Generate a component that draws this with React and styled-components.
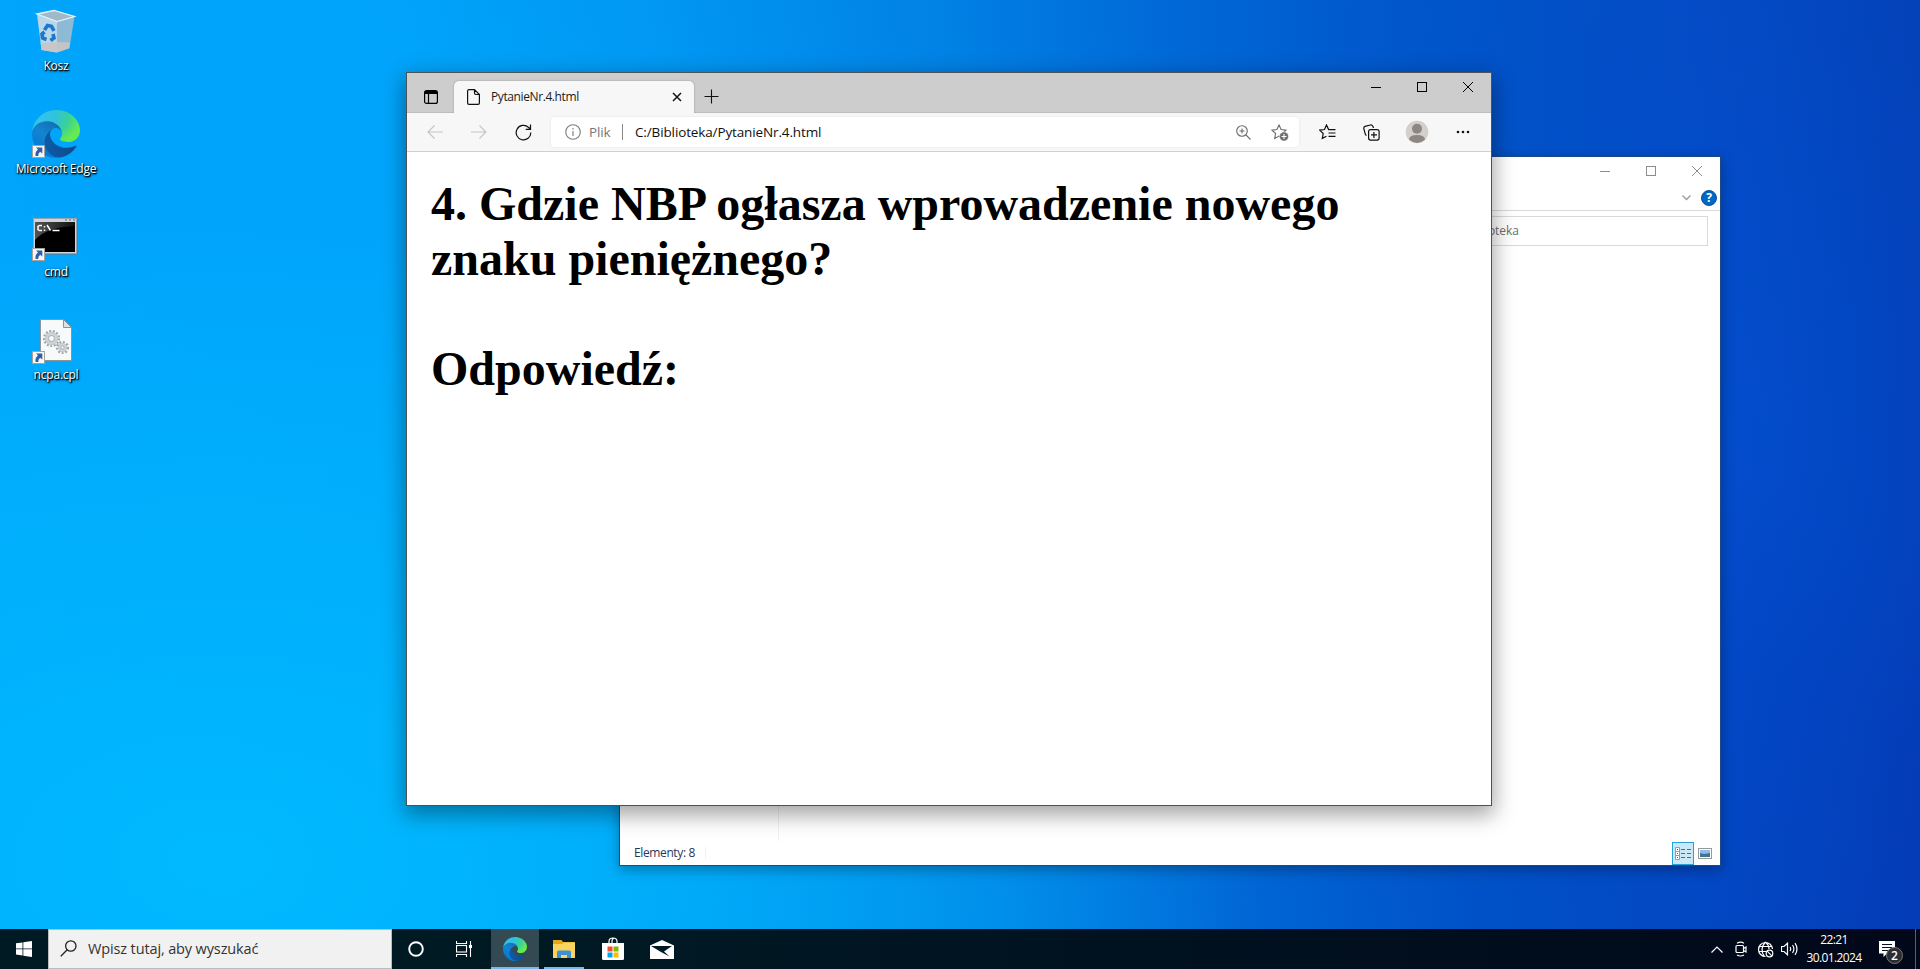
import React from "react";
import styled, { createGlobalStyle, css } from "styled-components";

const Global = createGlobalStyle`
  html, body { margin: 0; padding: 0; overflow: hidden; }
  * { box-sizing: border-box; }
  svg { display: block; flex: none; }
`;

const ui = '"Open Sans", "Noto Sans", sans-serif';

const Screen = styled.div`
  width: 1920px;
  height: 969px;
  display: flex;
  flex-direction: column;
  font-family: ${ui};
  font-size: 12px;
  overflow: hidden;
`;

const Desktop = styled.main`
  position: relative;
  height: 929px;
  background:
    linear-gradient(205deg, rgba(0, 120, 225, 0.14) 0, rgba(0, 120, 225, 0.08) 30%, transparent 41%),
    radial-gradient(ellipse 1050px 640px at 220px 860px, rgba(0, 190, 255, 0.8), transparent),
    radial-gradient(ellipse 260px 560px at 1740px 440px, rgba(0, 80, 220, 0.4), transparent),
    linear-gradient(86deg, #00a6fc 0%, #00a5fb 22%, #009af4 36%, #0084e6 50%, #0068d6 62%, #0052c8 74%, #0345c0 88%, #0339b2 100%);
`;

const IconGrid = styled.div`
  width: 112px;
  padding-top: 7px;
  display: flex;
  flex-direction: column;
`;

const Shortcut = styled.div`
  position: relative;
  height: 103px;
  display: flex;
  flex-direction: column;
  align-items: center;
  gap: 3px;
`;

const ShortcutLabel = styled.span`
  color: #fff;
  font-size: 12px;
  line-height: 16px;
  letter-spacing: -0.2px;
  white-space: nowrap;
  text-shadow: 1px 1px 1px #000, 1px 1px 2px rgba(0, 0, 0, 0.9), 0 1px 3px rgba(0, 0, 0, 0.6);
`;

const ArrowBadge = styled.div`
  position: absolute;
  left: 32px;
  top: 35px;
`;

const windowFrame = css`
  position: absolute;
  display: flex;
  flex-direction: column;
  background: #fff;
`;

const ExplorerWindow = styled.section`
  ${windowFrame}
  left: 619px;
  top: 156px;
  width: 1102px;
  height: 710px;
  border: 1px solid #1b4a86;
  box-shadow: 0 4px 12px rgba(0, 0, 0, 0.3);
`;

const BrowserWindow = styled.section`
  ${windowFrame}
  left: 406px;
  top: 72px;
  width: 1086px;
  height: 734px;
  border: 1px solid #4b5358;
  box-shadow: 0 7px 20px 2px rgba(0, 0, 0, 0.36);
`;

const Captions = styled.div`
  height: 28px;
  display: flex;
  justify-content: flex-end;
  align-items: center;
  color: ${(p) => p.$color};
`;

const CaptionButton = styled.span`
  width: 46px;
  height: 28px;
  display: flex;
  align-items: center;
  justify-content: center;
`;

const RibbonEnd = styled.div`
  height: 26px;
  padding: 1px 3px 0 0;
  display: flex;
  justify-content: flex-end;
  align-items: center;
  gap: 10px;
  border-bottom: 1px solid #d8d9da;
`;

const Help = styled.span`
  width: 16px;
  height: 16px;
  border-radius: 50%;
  display: flex;
  align-items: center;
  justify-content: center;
  background: #0067c4;
  border: 1px solid #0a5196;
  color: #fff;
  font-size: 12px;
  font-weight: 700;
  line-height: 14px;
`;

const PathBox = styled.div`
  margin: 5px 12px 0 200px;
  height: 30px;
  border: 1px solid #d9d9d9;
  display: flex;
  align-items: center;
  padding: 0 0 1px 643px;
  color: #6d6d6d;
  font-size: 12px;
  letter-spacing: -0.05px;
`;

const ExplorerBody = styled.div`
  flex: 1;
  display: flex;
`;

const NavPane = styled.div`
  width: 159px;
  border-right: 1px solid #f0f0f0;
`;

const StatusBar = styled.footer`
  height: 24px;
  display: flex;
  align-items: center;
  padding: 1px 8px 0 14px;
  color: #1e395b;
  font-size: 12px;
  letter-spacing: -0.38px;
`;

const StatusText = styled.span`
  width: 72px;
  height: 12px;
  margin-bottom: 2px;
  line-height: 12px;
  white-space: nowrap;
  border-right: 1px solid #f0f0f0;
`;

const ViewModes = styled.div`
  margin-left: auto;
  display: flex;
  align-items: center;
  gap: 4px;
`;

const ActiveView = styled.span`
  width: 22px;
  height: 23px;
  border: 1px solid #26a0da;
  background: #cbe8f6;
  display: flex;
  align-items: center;
  justify-content: center;
`;

const TabStrip = styled.header`
  height: 40px;
  display: flex;
  background: #cdcdcd;
  border-bottom: 1px solid #bdbdbd;
`;

const TabActions = styled.span`
  width: 47px;
  padding: 17px 0 0 17px;
`;

const Tab = styled.div`
  margin-top: 8px;
  width: 240px;
  height: 32px;
  padding: 0 12px 0 13px;
  display: flex;
  align-items: center;
  background: #f7f7f7;
  border-radius: 5px 5px 0 0;
  box-shadow: 0 0 2px rgba(0, 0, 0, 0.3);
  clip-path: inset(-3px -3px 0 -3px);
`;

const TabTitle = styled.span`
  margin-left: 11px;
  flex: 1;
  font-size: 12px;
  line-height: 16px;
  letter-spacing: -0.4px;
  color: #1b1b1b;
`;

const NewTab = styled.span`
  padding: 16px 0 0 10px;
`;

const TabCaptions = styled.div`
  margin-left: auto;
`;

const Toolbar = styled.nav`
  height: 39px;
  display: flex;
  align-items: center;
  background: #f7f7f7;
  border-bottom: 1px solid #d0d0d0;
`;

const ToolButton = styled.span`
  width: ${(p) => p.$w || 44}px;
  height: 38px;
  display: flex;
  align-items: center;
  justify-content: center;
`;

const Address = styled.div`
  width: 748px;
  height: 30px;
  margin-right: 6px;
  padding: 0 10px 0 14px;
  display: flex;
  align-items: center;
  background: #fff;
  border-radius: 4px;
  box-shadow: 0 0 3px rgba(0, 0, 0, 0.08);
`;

const Scheme = styled.span`
  margin-left: 8px;
  width: 33px;
  color: #767676;
  font-size: 13.5px;
  letter-spacing: -0.15px;
`;

const Url = styled.span`
  margin-left: 12px;
  flex: 1;
  color: #111;
  font-size: 13.5px;
  letter-spacing: -0.13px;
  white-space: nowrap;
`;

const Rule = styled.span`
  width: 1px;
  height: 16px;
  background: #8a8a8a;
`;

const AddressIcons = styled.span`
  display: flex;
  align-items: center;
  gap: 20px;
`;

const Page = styled.article`
  flex: 1;
  padding: 24px;
  font-family: "Liberation Serif", "Times New Roman", serif;
  font-weight: 700;
  font-size: 48px;
  line-height: 55px;
  color: #000;
`;

const Question = styled.p`
  margin: 0 0 55px;
`;

const Taskbar = styled.footer`
  height: 40px;
  display: flex;
  background: linear-gradient(90deg, #001a24 0%, #001a24 30%, #00101f 65%, #010819 100%);
  color: #fff;
`;

const TaskButton = styled.span`
  position: relative;
  width: 48px;
  height: 40px;
  margin-right: ${(p) => p.$gap || 0}px;
  display: flex;
  align-items: center;
  justify-content: center;
  background: ${(p) => (p.$active ? "#334a53" : "transparent")};
  ${(p) =>
    p.$line &&
    css`
      &::after {
        content: "";
        position: absolute;
        bottom: 0;
        width: ${p.$line}px;
        height: 2px;
        background: #76b9ed;
      }
    `}
`;

const Search = styled.div`
  width: 344px;
  height: 40px;
  padding: 0 0 1px 11px;
  display: flex;
  align-items: center;
  gap: 11px;
  background: #f1f1f1;
  border: 1px solid #bdbdbd;
  color: #333;
  font-size: 14.5px;
  letter-spacing: -0.13px;
`;

const Tray = styled.div`
  margin-left: auto;
  display: flex;
  align-items: center;
`;

const TrayIcon = styled.span`
  width: 24px;
  display: flex;
  justify-content: center;
`;

const Clock = styled.div`
  width: 66px;
  display: flex;
  flex-direction: column;
  align-items: center;
  font-size: 12px;
  line-height: 18px;
  letter-spacing: -0.62px;
`;

const Notifications = styled.div`
  position: relative;
  width: 48px;
  height: 40px;
  padding: 12px 0 0 12px;
`;

const Count = styled.span`
  position: absolute;
  left: 19px;
  top: 18px;
  width: 17px;
  height: 17px;
  border-radius: 50%;
  border: 1px solid #777;
  background: #2b2d33;
  font-size: 12px;
  font-weight: 600;
  line-height: 15px;
  text-align: center;
`;

const ShowDesktop = styled.span`
  width: 5px;
  height: 40px;
  border-left: 1px solid #59606c;
`;

const EdgeLogo = ({ size, id }) => (
  <svg width={size} height={size} viewBox="0 0 256 256">
    <defs>
      <linearGradient id={id + "a"} x1="0.2" y1="0.5" x2="1" y2="0.5">
        <stop offset="0" stopColor="#0c59a4" />
        <stop offset="1" stopColor="#114a8b" />
      </linearGradient>
      <linearGradient id={id + "b"} x1="0.8" y1="0.2" x2="0.3" y2="1">
        <stop offset="0" stopColor="#1272b8" />
        <stop offset="0.4" stopColor="#1583d0" />
        <stop offset="1" stopColor="#0078d4" />
      </linearGradient>
      <radialGradient id={id + "c"} cx="0.1" cy="0.2" r="0.95">
        <stop offset="0" stopColor="#35c1f1" />
        <stop offset="0.4" stopColor="#2fc2df" />
        <stop offset="0.7" stopColor="#3ad09a" />
        <stop offset="1" stopColor="#66eb4e" />
      </radialGradient>
    </defs>
    <g transform="translate(-4.63 -4.92)">
      <path fill={`url(#${id}a)`} d="M235.68 195.46a93.73 93.73 0 01-10.54 4.71 101.87 101.87 0 01-35.9 6.46c-47.32 0-88.54-32.55-88.54-74.32A31.48 31.48 0 01117.13 105c-42.8 1.8-53.8 46.4-53.8 72.53 0 73.88 68.09 81.37 82.76 81.37 7.91 0 19.84-2.3 27-4.56l1.31-.44a128.34 128.34 0 0066.6-52.8 4 4 0 00-5.32-5.64z" />
      <path fill={`url(#${id}b)`} d="M110.34 246.34A79.2 79.2 0 0187.6 225a80.72 80.72 0 0129.53-120c3.12-1.47 8.45-4.13 15.54-4a32.35 32.35 0 0125.69 13 31.88 31.88 0 016.36 18.66c0-.21 24.46-79.6-80-79.6-43.9 0-80 41.66-80 78.21a130.15 130.15 0 0012.11 56 128 128 0 00156.38 67.11 75.55 75.55 0 01-62.78-8z" />
      <path fill={`url(#${id}c)`} d="M156.94 153.78c-.81 1.05-3.3 2.5-3.3 5.66 0 2.61 1.7 5.12 4.72 7.23 14.38 10 41.49 8.68 41.56 8.68a59.56 59.56 0 0030.27-8.35 61.38 61.38 0 0030.43-52.88c.26-22.41-8-37.31-11.34-43.91C228.09 28.76 182.35 4.92 132.61 4.92a128 128 0 00-128 126.2c.48-36.54 36.8-66.05 80-66.05 3.5 0 23.46.34 42 10.07 16.34 8.58 24.9 18.94 30.85 29.21 6.18 10.67 7.28 24.15 7.28 29.52s-2.74 13.33-7.8 19.91z" />
    </g>
  </svg>
);

const ShortcutArrow = () => (
  <ArrowBadge>
    <svg width="13" height="13">
      <rect x="0.5" y="0.5" width="12" height="12" fill="#f7f7f7" stroke="#a8a29c" />
      <path d="M4 2.5h6.3v6L8.200 6.700Q6 8.300 6.200 11H3.600Q2.800 7 6 4.600z" fill="#2c5fa8" />
    </svg>
  </ArrowBadge>
);

const BinIcon = () => (
  <svg width="48" height="48">
    <g transform="translate(0 1)">
      <path d="M5 6l17-3.500 20.500 6-17.500 5z" fill="#9fb9c9" />
      <path d="M5 6l20 7.500V44.500L9.500 42z" fill="#b9d7e8" />
      <path d="M25 13.500l17.500-5L37.500 40 25 44.500z" fill="#8fbad6" />
      <path d="M8.600 35l16-1 13.500.5-1 6L25 44.500 9.500 42z" fill="#c9c5c6" opacity=".9" />
      <path d="M5 6l17-3.500 20.500 6-17.500 5z" fill="none" stroke="#e6f2f8" strokeWidth="1.300" />
      <path d="M12.500 22l3-4.500 4 .8 2.500 4.500M21 26l1 4-3.500 2.500M14.500 31.500l-4-1.500-.5-4 2.500-2" fill="none" stroke="#1b78cf" strokeWidth="3.600" />
    </g>
  </svg>
);

const CmdIcon = () => (
  <svg width="48" height="48">
    <defs>
      <linearGradient id="cmdGlow" x1="0" y1="0" x2="1" y2="0">
        <stop offset="0" stopColor="#555" />
        <stop offset="1" stopColor="#111" />
      </linearGradient>
    </defs>
    <rect x="3" y="6" width="43" height="36" fill="#5e7787" opacity=".6" />
    <rect x="1.500" y="5.500" width="43" height="35" fill="#cfd5da" stroke="#9aa3ab" />
    <path d="M33 7h2m2 0h2m2 0h2" stroke="#56657a" strokeWidth="1.200" />
    <rect x="3" y="9" width="40" height="30" fill="#000" />
    <path d="M3 9h40v4Q14 14 3 27z" fill="url(#cmdGlow)" />
    <path d="M10 12.500H7.500l-1.500 1v3l1.500 1H10M12.500 13v1.500m0 2v1.500M15 12l3.500 5.500M20.500 17.500h7" fill="none" stroke="#fff" strokeWidth="1.500" />
  </svg>
);

const Gear = ({ x, y, r, hole }) => (
  <g transform={`translate(${x} ${y})`} fill="none">
    <circle r={r + 1.2} stroke="#a0a8ad" strokeWidth="2.400" strokeDasharray="1.900 1.700" />
    <circle r={(r + hole) / 2} stroke="#cdd4d8" strokeWidth={r - hole} />
    <circle r={r} stroke="#b4bbc0" strokeWidth=".6" />
    <circle r={hole} stroke="#9da5aa" strokeWidth=".9" />
  </g>
);

const CplIcon = () => (
  <svg width="48" height="48">
    <path d="M8.500 3.500h23l8 8v33h-31z" fill="#f8f9f9" stroke="#8d9498" />
    <path d="M31.500 3.500v8h8z" fill="#dfe2e4" stroke="#8d9498" />
    <Gear x={19.5} y={22.5} r={6.2} hole={3} />
    <Gear x={30.5} y={31.5} r={4.2} hole={1.6} />
  </svg>
);

const CaptionSet = ({ color }) => (
  <Captions $color={color}>
    <CaptionButton>
      <svg width="10" height="10" stroke="currentColor"><path d="M0 5.500h10" /></svg>
    </CaptionButton>
    <CaptionButton>
      <svg width="10" height="10" stroke="currentColor" fill="none"><rect x=".5" y=".5" width="9" height="9" /></svg>
    </CaptionButton>
    <CaptionButton>
      <svg width="10" height="10" stroke="currentColor"><path d="M0 0l10 10M10 0L0 10" /></svg>
    </CaptionButton>
  </Captions>
);

const Explorer = () => (
  <ExplorerWindow>
    <CaptionSet color="#8c8c8c" />
    <RibbonEnd>
      <svg width="9" height="6" fill="none" stroke="#999" strokeWidth="1.300"><path d="M.5.500l4 4 4-4" /></svg>
      <Help>?</Help>
    </RibbonEnd>
    <PathBox>Biblioteka</PathBox>
    <ExplorerBody>
      <NavPane />
    </ExplorerBody>
    <StatusBar>
      <StatusText>Elementy: 8</StatusText>
      <ViewModes>
        <ActiveView>
          <svg width="16" height="13" fill="none">
            <path d="M.5.500h4v12h-4zM.5 4.500h4M.5 8.500h4" fill="#fff" stroke="#9a9a9a" />
            <path d="M6 2.500h4m2 0h4M6 6.500h4m2 0h4M6 10.500h4m2 0h4" stroke="#666" />
            <path d="M2 2.500h1" stroke="#333" /><path d="M2 6.500h1" stroke="#37f" /><path d="M2 10.500h1" stroke="#d22" />
          </svg>
        </ActiveView>
        <svg width="14" height="11">
          <rect x=".5" y=".5" width="13" height="10" fill="#fff" stroke="#999" />
          <rect x="2" y="2" width="10" height="7" fill="#8bbdf0" />
          <path d="M2 5l4 1 6-1v4H2z" fill="#3f7590" />
        </svg>
      </ViewModes>
    </StatusBar>
  </ExplorerWindow>
);

const star = "M8 1l2.100 4.500 4.900.6-3.600 3.400.9 4.900L8 12.100 3.700 14.400l.9-4.900L1 6.100l4.900-.6z";

const Browser = () => (
  <BrowserWindow>
    <TabStrip>
      <TabActions>
        <svg width="14" height="14" fill="none" stroke="#000" strokeWidth="1.200">
          <rect x=".6" y=".6" width="12.800" height="12.800" rx="2" />
          <path d="M1 2.500h12" strokeWidth="3" /><path d="M4.500 4v9" />
        </svg>
      </TabActions>
      <Tab>
        <svg width="13" height="16" fill="none" stroke="#111" strokeWidth="1.200">
          <path d="M2 .6h5.500L12.400 5.500V14q0 1.400-1.400 1.400H2Q.6 15.400.6 14V2Q.6.600 2 .6zM7.500.600v3.500q0 1.400 1.400 1.400h3.500" />
        </svg>
        <TabTitle>PytanieNr.4.html</TabTitle>
        <svg width="10" height="10" stroke="#111" strokeWidth="1.500"><path d="M1 1l8 8M9 1L1 9" /></svg>
      </Tab>
      <NewTab>
        <svg width="15" height="15" stroke="#111" strokeWidth="1.100"><path d="M.5 7.500h14M7.500.500v14" /></svg>
      </NewTab>
      <TabCaptions>
        <CaptionSet color="#000" />
      </TabCaptions>
    </TabStrip>
    <Toolbar>
      <ToolButton $w={56}>
        <svg width="16" height="14" fill="none" stroke="#c4c4c4" strokeWidth="1.100"><path d="M16 7H1M7.500.500L1 7l6.500 6.500" /></svg>
      </ToolButton>
      <ToolButton $w={32}>
        <svg width="16" height="14" fill="none" stroke="#c4c4c4" strokeWidth="1.100"><path d="M0 7h15M8.500.500L15 7l-6.500 6.500" /></svg>
      </ToolButton>
      <ToolButton $w={56}>
        <svg width="17" height="17" fill="none" stroke="#111" strokeWidth="1.200">
          <path d="M15.800 8.500A7.300 7.300 0 1 1 13.400 3.200L15.500 5M15.500.500V5.300H10.700" />
        </svg>
      </ToolButton>
      <Address>
        <svg width="16" height="16" fill="none" stroke="#7a7a7a" strokeWidth="1.100">
          <circle cx="8" cy="8" r="7.300" /><path d="M8 7v5M8 4v1.500" />
        </svg>
        <Scheme>Plik</Scheme>
        <Rule />
        <Url>C:/Biblioteka/PytanieNr.4.html</Url>
        <AddressIcons>
          <svg width="15" height="15" fill="none" stroke="#6b6b6b" strokeWidth="1.100">
            <circle cx="6" cy="6" r="5.300" /><path d="M10 10l4.500 4.500M3.500 6h5M6 3.500v5" />
          </svg>
          <svg width="18" height="17" fill="none" stroke="#6b6b6b" strokeWidth="1.100">
            <path d={star} />
            <circle cx="13" cy="12.500" r="4.500" fill="#6b6b6b" stroke="#fff" strokeWidth=".5" />
            <path d="M10.500 12.500h5M13 10v5" stroke="#fff" />
          </svg>
        </AddressIcons>
      </Address>
      <ToolButton>
        <svg width="17" height="17" fill="none" stroke="#111" strokeWidth="1.200">
          <path d="M9.500 5.600L7.500 1 5.500 5.500l-4.900.6 3.600 3.400-.9 4.900 4.200-2.200M7.500 1l2.200 4.600h2M9.500 5.600h7M9.500 9h7M9.500 12.400h7" />
        </svg>
      </ToolButton>
      <ToolButton>
        <svg width="17" height="17" fill="none" stroke="#111" strokeWidth="1.200">
          <rect x="5.600" y="5.600" width="10.500" height="10.500" rx="2" />
          <path d="M10.900 8v6M8 10.900h6M3.500 11.500Q2.500 11 2.200 9.800L.8 4.600Q.5 3 2 2.400L7.500 1Q9 .7 10 2.500L10.500 4" />
        </svg>
      </ToolButton>
      <ToolButton $w={48}>
        <svg width="24" height="24">
          <circle cx="12" cy="12" r="11.300" fill="#d3d0cc" />
          <circle cx="12" cy="8.800" r="5" fill="#8c8783" />
          <path d="M4 19.800Q4 15 12 15t8 4.800Q12 26 4 19.800z" fill="#8c8783" />
        </svg>
      </ToolButton>
      <ToolButton>
        <svg width="14" height="4" fill="#111"><circle cx="2" cy="2" r="1.300" /><circle cx="7" cy="2" r="1.300" /><circle cx="12" cy="2" r="1.300" /></svg>
      </ToolButton>
    </Toolbar>
    <Page>
      <Question>4. Gdzie NBP ogłasza wprowadzenie nowego<br />znaku pieniężnego?</Question>
      <Question>Odpowiedź:</Question>
    </Page>
  </BrowserWindow>
);

const Bar = () => (
  <Taskbar>
    <TaskButton>
      <svg width="16" height="16" fill="#fff"><path d="M0 2.300L6.500 1.400v6.100H0zM7.300 1.300L16 0v7.500H7.300zM0 8.300h6.500v6.200L0 13.600zM7.300 8.300H16V16l-8.700-1.300z" /></svg>
    </TaskButton>
    <Search>
      <svg width="17" height="17" fill="none" stroke="#222" strokeWidth="1.300"><circle cx="10.800" cy="6" r="5.200" /><path d="M7.200 9.800L.8 16.200" /></svg>
      <span>Wpisz tutaj, aby wyszukać</span>
    </Search>
    <TaskButton>
      <svg width="16" height="16" fill="none" stroke="#fff" strokeWidth="1.900"><circle cx="8" cy="8" r="6.800" /></svg>
    </TaskButton>
    <TaskButton $gap={3}>
      <svg width="16" height="16" fill="none" stroke="#fff" strokeWidth="1.100">
        <path d="M.5 0v2.500h10V0M.5 16v-2.500h10V16" /><rect x=".5" y="4.500" width="10" height="6.500" />
        <path d="M14.500 0v16" /><rect x="13.500" y="4.500" width="2" height="2" fill="#fff" />
      </svg>
    </TaskButton>
    <TaskButton $active $line={48} $gap={1}>
      <EdgeLogo size={24} id="taskEdge" />
    </TaskButton>
    <TaskButton $line={40} $gap={1}>
      <svg width="22" height="18">
        <path d="M0 0h8.500l1.500 2H22v16H0z" fill="#e9a417" />
        <path d="M0 4h9l1.500-1.500H22V18H0z" fill="#fbd35f" />
        <path d="M4 18v-6q0-1.500 1.500-1.500h11Q18 10.500 18 12v6h-4v-3H8v3z" fill="#3f8fd4" />
      </svg>
    </TaskButton>
    <TaskButton $gap={1}>
      <svg width="24" height="24">
        <path d="M8 6V4.500Q8 1 12 1t4 3.500V6M11 6V4.500Q11 1.500 13 1.500" fill="none" stroke="#fff" strokeWidth="1.200" />
        <path d="M1 6h22v15.500q0 1.500-1.500 1.500h-19Q1 23 1 21.500z" fill="#fff" />
        <path d="M6.500 9.500h5v5h-5z" fill="#f25022" /><path d="M12.500 9.500h5v5h-5z" fill="#7fba00" />
        <path d="M6.500 15.500h5v5h-5z" fill="#00a4ef" /><path d="M12.500 15.500h5v5h-5z" fill="#ffb900" />
      </svg>
    </TaskButton>
    <TaskButton>
      <svg width="24" height="19"><path d="M0 5.500L12 0l12 5.500V19H0z" fill="#fff" /><path d="M1 6h21l-8 5.500 5.500 5L11 12z" fill="#001a24" /></svg>
    </TaskButton>
    <Tray>
      <TrayIcon>
        <svg width="12" height="7" fill="none" stroke="#fff" strokeWidth="1.200"><path d="M.5 6.500L6 1l5.500 5.500" /></svg>
      </TrayIcon>
      <TrayIcon>
        <svg width="12" height="16" fill="none" stroke="#fff" strokeWidth="1.200"><rect x="1" y="4.500" width="7.500" height="7" rx="1" /><path d="M8.500 7.500l2.500-1.500v5L8.500 9.500M2 2.200Q5.500.200 9 2.200M2 14Q5.500 16 9 14" /></svg>
      </TrayIcon>
      <TrayIcon>
        <svg width="17" height="17" fill="none" stroke="#fff" strokeWidth="1.200">
          <path d="M15.500 8A7 7 0 1 0 8.500 15.500M8.500 1Q2 8 7.500 15.500M8.500 1Q12 4 12 8M1.500 5.500H15M1.500 10.500H9" />
          <circle cx="12.500" cy="12.500" r="3.300" /><path d="M10.200 10.200l4.600 4.600" />
        </svg>
      </TrayIcon>
      <TrayIcon>
        <svg width="17" height="14" fill="none" stroke="#fff" strokeWidth="1.200"><path d="M.5 4.500H3L6.500 1.200v11.600L3 9.500H.5zM9 5q1.400 2 0 4M11.500 3q2.800 4 0 8M14 1.200q4 5.800 0 11.600" /></svg>
      </TrayIcon>
      <Clock>
        <span>22:21</span>
        <span>30.01.2024</span>
      </Clock>
      <Notifications>
        <svg width="16" height="16"><path d="M0 0h16v12.500H8L4.500 16v-3.500H0z" fill="#fff" /><path d="M3 3.500h10M3 6.500h10M3 9.500h7" stroke="#0a1020" /></svg>
        <Count>2</Count>
      </Notifications>
      <ShowDesktop />
    </Tray>
  </Taskbar>
);

export default function App() {
  return (
    <Screen>
      <Global />
      <Desktop>
        <IconGrid>
          <Shortcut><BinIcon /><ShortcutLabel>Kosz</ShortcutLabel></Shortcut>
          <Shortcut><EdgeLogo size={48} id="deskEdge" /><ShortcutArrow /><ShortcutLabel>Microsoft Edge</ShortcutLabel></Shortcut>
          <Shortcut><CmdIcon /><ShortcutArrow /><ShortcutLabel>cmd</ShortcutLabel></Shortcut>
          <Shortcut><CplIcon /><ShortcutArrow /><ShortcutLabel>ncpa.cpl</ShortcutLabel></Shortcut>
        </IconGrid>
        <Explorer />
        <Browser />
      </Desktop>
      <Bar />
    </Screen>
  );
}
